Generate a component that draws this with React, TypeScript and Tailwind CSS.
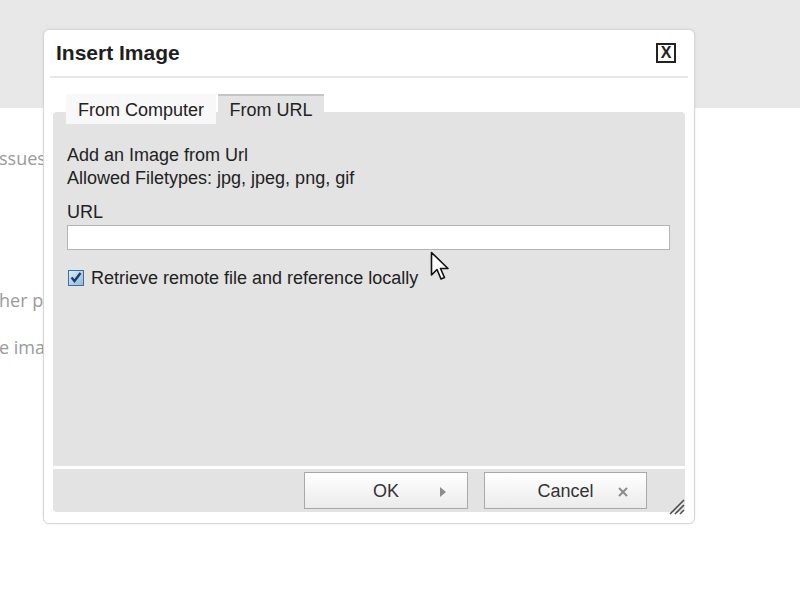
export default function App() {
  return (
    <div className="relative h-[600px] w-[800px] overflow-hidden bg-white" style={{ fontFamily: '"Liberation Sans", Arial, sans-serif' }}>
      {/* page behind the modal */}
      <div className="h-[108px] bg-[#e8e8e8]" />
      <div className="text-[18px] leading-[24px] text-[#9a9a9a]" style={{ fontFamily: '"Open Sans", sans-serif' }}>
        <p className="-ml-[1px] mt-[38px] whitespace-nowrap">ssues with the editor</p>
        <p className="-ml-[1px] mt-[118px] whitespace-nowrap">her pages in the site</p>
        <p className="-ml-[1px] mt-[23px] whitespace-nowrap">e images are stored</p>
      </div>

      {/* modal */}
      <div className="absolute left-[43px] top-[29px] flex h-[495px] w-[652px] flex-col rounded-[6px] border border-[#d6d6d6] bg-white shadow-[0_0_3px_rgba(0,0,0,0.08)]">
        <div className="flex h-[46px] items-center justify-between pl-[12px] pr-[18px]">
          <h1 className="text-[21px] font-bold text-[#1e1e1e]">Insert Image</h1>
          <button className="flex h-[20px] w-[20px] items-center justify-center border-2 border-[#222] text-[16px] font-semibold leading-none text-[#222]">
            X
          </button>
        </div>
        <div className="mx-[6px] h-[2px] bg-[#e8e8e8]" />

        <div className="relative z-10 flex h-[34px] gap-[2px] pl-[22px] pt-[16px] text-[18px] text-[#222]">
          <div className="flex h-[30px] w-[150px] items-center justify-center bg-[#f8f8f8] pt-[2px]">From Computer</div>
          <div className="flex h-[30px] w-[106px] items-center justify-center border-t-2 border-[#c4c4c4] bg-[#e3e3e3]">From URL</div>
        </div>

        <div className="mx-[9px] h-[354px] rounded-t-[4px] bg-[#e3e3e3] pl-[14px] pr-[15px] pt-[32px] text-[18px] leading-[23px] text-[#222]">
          <p>Add an Image from Url</p>
          <p>Allowed Filetypes: jpg, jpeg, png, gif</p>
          <p className="mt-[11px]">URL</p>
          <input type="text" className="mt-[1px] block h-[25px] w-full border border-[#b4b4b4] bg-white outline-none" />
          <label className="mt-[17px] flex items-center gap-[7px]">
            <svg width="16" height="16" viewBox="0 0 16 16" className="ml-[1px] -mt-[2px]">
              <defs>
                <linearGradient id="cb" x1="0" y1="0" x2="1" y2="1">
                  <stop offset="0" stopColor="#dfeefa" />
                  <stop offset="1" stopColor="#8fb6d8" />
                </linearGradient>
              </defs>
              <rect x="0.5" y="0.5" width="15" height="15" fill="url(#cb)" stroke="#3d6f9e" />
              <path d="M3.5 7.5 L6.5 11 L12.5 3" fill="none" stroke="#1c3b70" strokeWidth="2.4" />
            </svg>
            <span className="text-[#222]">Retrieve remote file and reference locally</span>
          </label>
        </div>

        <div className="relative mx-[9px] mt-[3px] flex h-[43px] justify-end gap-[16px] rounded-b-[4px] bg-[#e3e3e3] pr-[38px] pt-[3px]">
          <button className="relative flex h-[37px] w-[164px] items-center justify-center border border-[#a9a9a9] bg-gradient-to-b from-[#ffffff] to-[#ebebeb] pt-[2px] text-[18px] text-[#333]">
            OK
            <svg width="8" height="10" viewBox="0 0 8 10" className="absolute right-[20px] top-[14px]">
              <path d="M1 0 L7 5 L1 10 Z" fill="#8c8c8c" />
            </svg>
          </button>
          <button className="relative flex h-[37px] w-[163px] items-center justify-center border border-[#a9a9a9] bg-gradient-to-b from-[#ffffff] to-[#ebebeb] pt-[2px] text-[18px] text-[#333]">
            Cancel
            <svg width="10" height="10" viewBox="0 0 10 10" className="absolute right-[18px] top-[14px]">
              <path d="M1 1 L9 9 M9 1 L1 9" stroke="#8c8c8c" strokeWidth="2" />
            </svg>
          </button>
          <svg width="18" height="18" viewBox="0 0 18 18" className="absolute bottom-[-3px] right-[0px]">
            <path d="M17 3 L3 17 M17 8 L8 17 M17 13 L13 17" stroke="#4a4a4a" strokeWidth="1.5" />
          </svg>
        </div>
      </div>

      {/* mouse pointer */}
      <svg width="20" height="32" viewBox="0 0 20 32" className="absolute left-[430px] top-[251px]">
        <path d="M1.5 1.5 L1.5 24 L7 18.5 L11 28 L14.5 26.5 L10.5 17.5 L18 17.5 Z" fill="#fff" stroke="#111" strokeWidth="1.6" strokeLinejoin="round" />
      </svg>
    </div>
  );
}
